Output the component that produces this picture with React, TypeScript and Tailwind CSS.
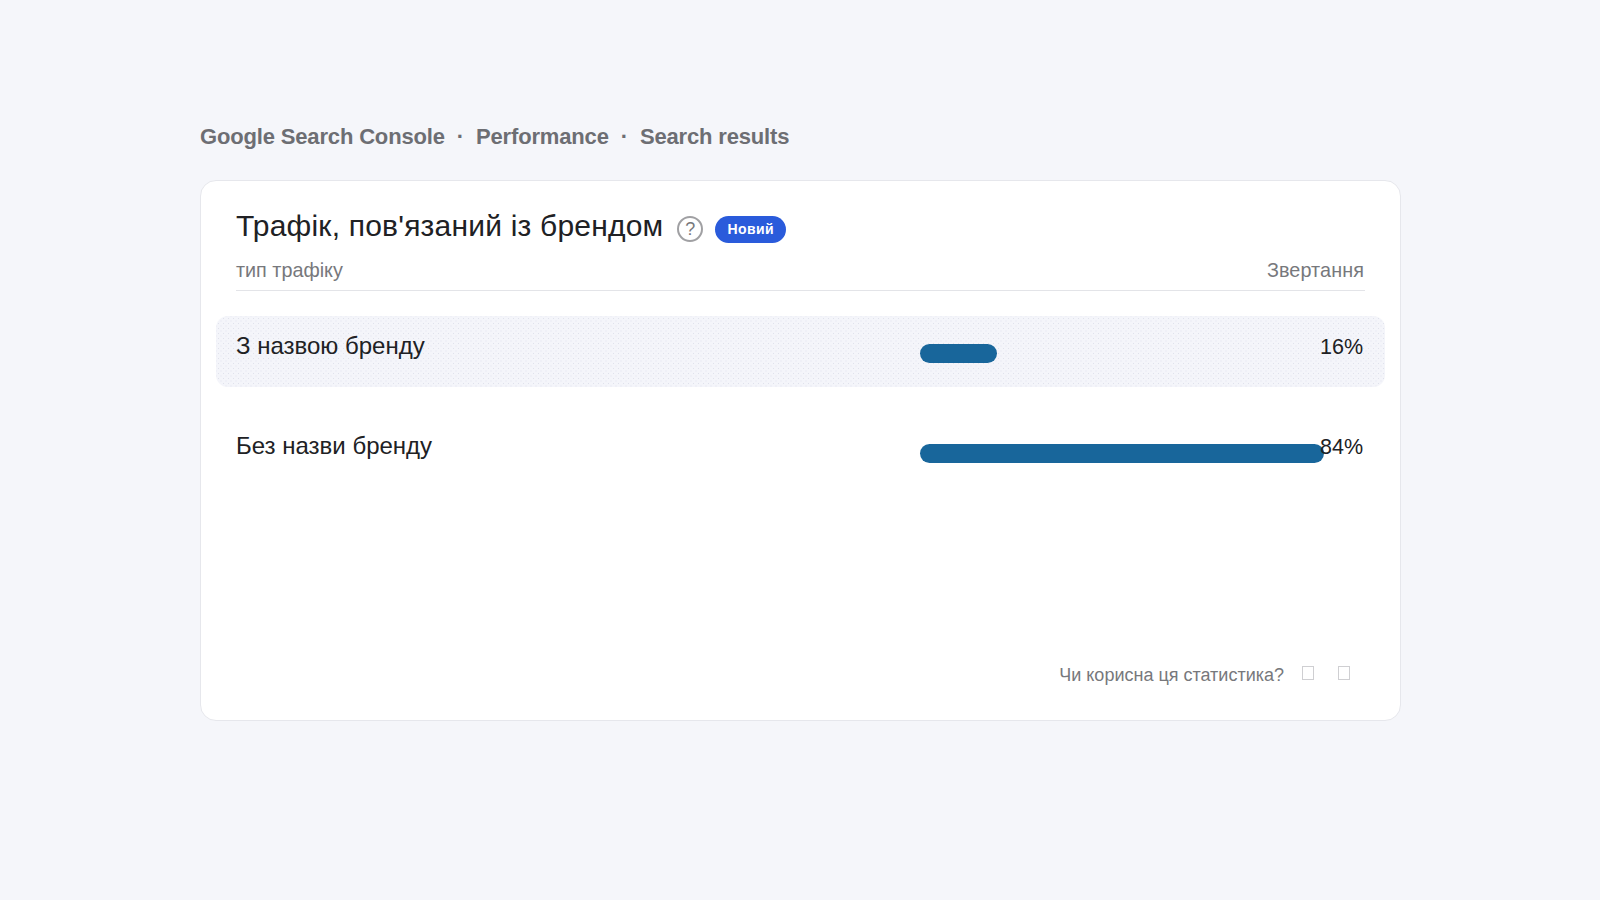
const font = "font-['Liberation_Sans',Arial,sans-serif]";

function Row({ label, value, highlight }: { label: string; value: number; highlight?: boolean }) {
  return (
    <div
      className={
        "relative -mx-5 flex h-[71px] items-start px-5 rounded-xl " +
        (highlight
          ? "bg-[#f4f5fa] bg-[radial-gradient(#e0e2ec_0.6px,transparent_0.9px),radial-gradient(#e0e2ec_0.6px,transparent_0.9px)] bg-[length:5px_5px] bg-[position:0_0,2.5px_2.5px]"
          : "")
      }
    >
      <div className="w-[684px] shrink-0 pt-[15px] text-[24px] leading-[30px] text-[#202124]">{label}</div>
      <div className="mt-[28px] h-[19px] w-[404px] shrink-0">
        <div className="h-full rounded-full bg-[#18669b]" style={{ width: `${(value / 84) * 100}%` }} />
      </div>
      <div className="flex min-w-0 flex-1 justify-end whitespace-nowrap pt-[16px] pr-[2px] text-[21.5px] leading-[30px] text-[#202124]">{value}%</div>
    </div>
  );
}

export default function App() {
  return (
    <div className={"flex min-h-[900px] flex-col bg-[#f5f6fa] pt-[120px] pl-[200px] " + font}>
      <div className="flex h-[32px] items-center text-[22px] font-bold tracking-[-0.16px] text-[#6d6e73]">
        <span>Google Search Console</span>
        <span className="mx-[12px]">·</span>
        <span>Performance</span>
        <span className="mx-[12px]">·</span>
        <span>Search results</span>
      </div>

      <div className="mt-[28px] flex h-[541px] w-[1201px] flex-col rounded-[16px] border border-[#e6e7ec] bg-white px-[35px] pt-[25px]">
        <div className="flex items-center">
          <h1 className="text-[30px] leading-[40px] font-normal tracking-[0.2px] text-[#202124]">Трафік, пов'язаний із брендом</h1>
          <span className="mt-[6px] ml-[14px] flex h-[26px] w-[26px] items-center justify-center rounded-full border-2 border-[#a0a0a3] text-[18px] text-[#77787c]">?</span>
          <span className="mt-[6px] ml-[12px] flex h-[27px] w-[71px] items-center justify-center rounded-full bg-[#2a5bdb] text-[14px] font-bold tracking-[0.4px] text-white">Новий</span>
        </div>
        <div className="mt-[10px] flex h-[35px] items-start justify-between border-b border-[#e3e4e8] text-[19.8px] leading-[28px] text-[#77787c]">
          <span>тип трафіку</span>
          <span className="pr-[1px] tracking-[0.1px]">Звертання</span>
        </div>

        <div className="mt-[25px] flex flex-col gap-[29px]">
          <Row label="З назвою бренду" value={16} highlight />
          <Row label="Без назви бренду" value={84} />
        </div>

        <div className="mt-auto mb-[31px] flex items-center justify-end gap-[12px] pr-[15px] text-[18px] text-[#77787c]">
          <span>Чи корисна ця статистика?</span>
          <span className="ml-[6px] -mt-[6px] h-[14px] w-[12px] border border-[#cfcfd2]" />
          <span className="ml-[12px] -mt-[6px] h-[14px] w-[12px] border border-[#cfcfd2]" />
        </div>
      </div>
    </div>
  );
}
